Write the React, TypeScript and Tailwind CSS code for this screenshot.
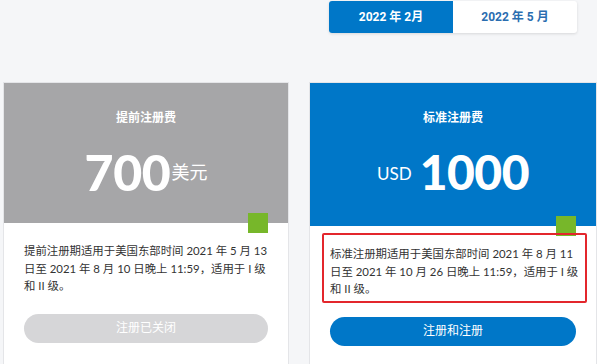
const latin = "font-['Lato','Noto_Sans_CJK_SC',sans-serif]"

function PriceCard({
  title,
  headerColor,
  headerHeight,
  price,
  note,
  button,
  buttonClass,
  highlight,
}: {
  title: string
  headerColor: string
  headerHeight: string
  price: React.ReactNode
  note: string[]
  button: string
  buttonClass: string
  highlight?: boolean
}) {
  return (
    <div className="relative flex flex-col bg-white border border-[#e4e5e8] h-[290px]">
      <div className={`${headerColor} ${headerHeight} flex flex-col items-center text-white`}>
        <div className="mt-[27px] text-[12px] font-bold leading-[16px]">{title}</div>
        <div className="mt-[22px] flex items-end">{price}</div>
      </div>
      <div className="relative px-[20px] pt-[19px]">
        {/* green tag on the header edge */}
        <div className="absolute right-[20px] top-[-10px] w-[20px] h-[20px] bg-[#77b72a]" />
        {highlight && (
          <div className="absolute left-[12px] right-[9px] top-[7px] h-[70px] border-2 border-[#e3262c] rounded-[2px]" />
        )}
        <p className="text-[11.4px] leading-[17.5px] text-[#333] whitespace-nowrap">
          {note.map((line, i) => (
            <span key={i} className="block">{line}</span>
          ))}
        </p>
        <button className={`mt-[19px] w-full h-[29px] rounded-full text-[12px] text-white ${buttonClass}`}>
          {button}
        </button>
      </div>
    </div>
  )
}

export default function App() {
  return (
    <div className={`w-[597px] h-[364px] overflow-hidden bg-[#f5f6f8] ${latin}`}>
      <div className="grid grid-cols-[286px_288px] gap-x-[20px] pl-[3px] pt-[1px]">
        <div />
        <div className="px-[20px]">
          <div className="flex h-[32px] rounded-[3px] overflow-hidden shadow-[0_1px_3px_rgba(0,0,0,0.12)] bg-white font-['Roboto','Noto_Sans_CJK_SC',sans-serif] text-[12px] font-bold">
            <button className="flex-1 bg-[#0077c8] text-white">2022 年 2月</button>
            <button className="flex-1 text-[#2a6db0]">2022 年 5 月</button>
          </div>
        </div>

        <div className="mt-[49px]">
          <PriceCard
            title="提前注册费"
            headerColor="bg-[#a6a6a8]"
            headerHeight="h-[140px]"
            price={
              <>
                <span className="text-[50px] font-black leading-[48px] tracking-[-0.3px]">700</span>
                <span className="text-[18px] leading-[22px] mb-[13px] ml-[1px]">美元</span>
              </>
            }
            note={[
              '提前注册期适用于美国东部时间 2021 年 5 月 13',
              '日至 2021 年 8 月 10 日晚上 11:59，适用于 I 级',
              '和 II 级。',
            ]}
            button="注册已关闭"
            buttonClass="bg-[#d6d6d8]"
          />
        </div>
        <div className="mt-[49px]">
          <PriceCard
            title="标准注册费"
            headerColor="bg-[#0077c8]"
            headerHeight="h-[143px]"
            price={
              <>
                <span className="text-[17px] leading-[22px] mb-[11px] mr-[8px]">USD</span>
                <span className="text-[48px] font-black leading-[48px] tracking-[-0.5px]">1000</span>
              </>
            }
            note={[
              '标准注册期适用于美国东部时间 2021 年 8 月 11',
              '日至 2021 年 10 月 26 日晚上 11:59，适用于 I 级',
              '和 II 级。',
            ]}
            button="注册和注册"
            buttonClass="bg-[#0077c8]"
            highlight
          />
        </div>
      </div>
    </div>
  )
}
